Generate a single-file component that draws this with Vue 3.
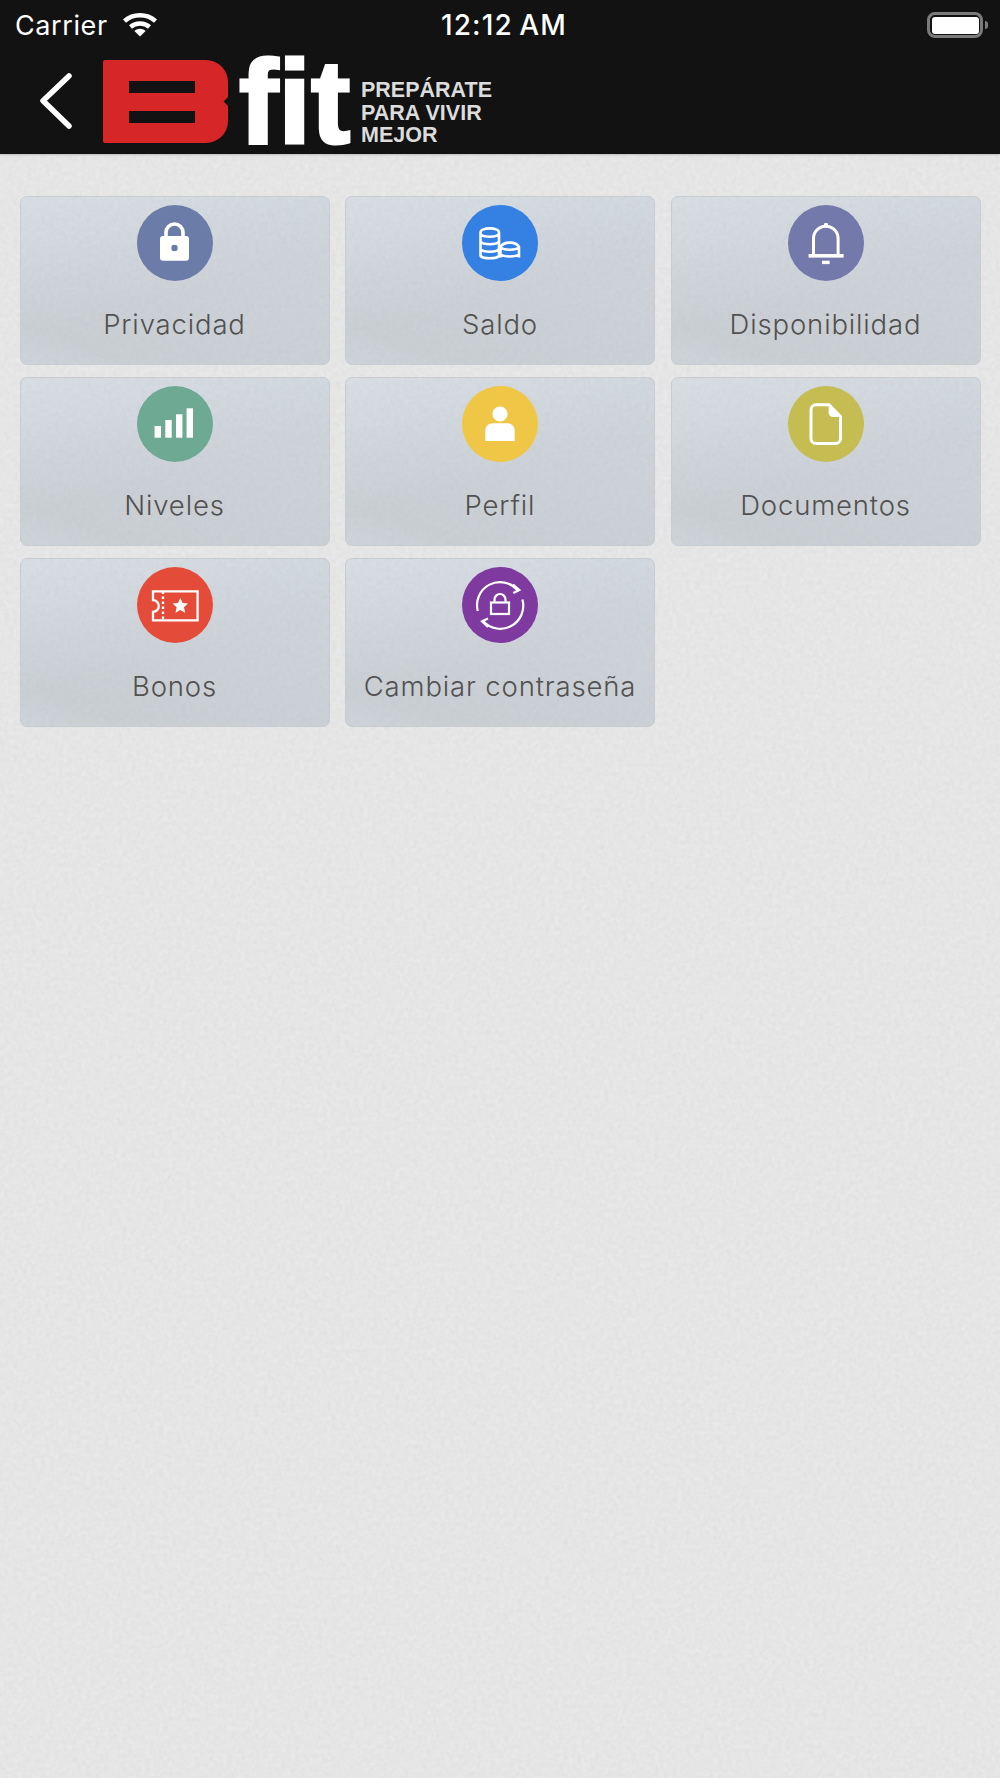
<template>
  <div class="page">
    <header class="topbar">
      <div class="status">
        <div class="carrier">
          <span>Carrier</span>
          <svg class="wifi" width="34" height="24" viewBox="0 0 34 24">
            <path d="M1.500 8.200C10 .4 24 .4 32.500 8.200" />
            <path d="M7.500 14C13 9.200 21 9.200 26.500 14" />
            <path class="wifi-dot" d="M17 23.500l-5.600-5.600c3.200-2.800 8-2.800 11.200 0z" />
          </svg>
        </div>
        <div class="time">12:12 AM</div>
        <div class="battery">
          <div class="battery-box"><div class="battery-fill"></div></div>
          <div class="battery-nub"></div>
        </div>
      </div>
      <div class="nav">
        <svg class="back" width="38" height="60" viewBox="0 0 38 60">
          <path d="M30 5L4 29.700 30 55" />
        </svg>
        <div class="logo">
          <div class="logo-b">
            <span class="logo-hole"></span>
            <span class="logo-hole"></span>
            <span class="logo-notch"></span>
          </div>
          <div class="logo-fit">fit</div>
          <div class="logo-tag">PREPÁRATE<br />PARA VIVIR<br />MEJOR</div>
        </div>
      </div>
    </header>

    <main class="grid">
      <div v-for="item in items" :key="item.label" class="card">
        <div class="circle" :style="{ backgroundColor: item.color }">
          <svg width="76" height="76" viewBox="0 0 76 76">
            <g v-if="item.icon === 'lock'">
              <path class="line" stroke-width="3.600" d="M29 33v-5.500a8.500 8.500 0 0 1 17 0V33" />
              <rect class="solid" x="23" y="31" width="29" height="24.700" rx="3" />
              <circle :fill="item.color" cx="37.500" cy="43" r="3.200" />
            </g>
            <g v-else-if="item.icon === 'coins'" class="line" stroke-width="2.600">
              <path d="M18.500 51.500V27.500c0-5.500 18.500-5.500 18.500 0v24M18.500 29c3 3.600 15.500 3.600 18.500 0M18.500 36.500c3 3.600 15.500 3.600 18.500 0M18.500 44c3 3.600 15.500 3.600 18.500 0M18.500 51c3 3 15.500 3 18.500 0" />
              <path d="M38.500 42c3-5.800 15.500-5.800 18.500 0v10.500M38.500 42c3 3.600 15.500 3.600 18.500 0M38.500 49c3 3.400 15.500 3.400 18.500 0M38.500 42v10.500" />
            </g>
            <g v-else-if="item.icon === 'bell'">
              <path class="line" stroke-width="3" d="M25.500 49.500V33.500a12.300 12.300 0 0 1 24.600 0v16" />
              <rect class="solid" x="20.600" y="49" width="35" height="3.600" />
              <rect class="solid" x="34" y="55.700" width="7.600" height="3.400" />
              <rect class="solid" x="36" y="18" width="4" height="4.500" rx="1" />
            </g>
            <g v-else-if="item.icon === 'bars'" class="solid">
              <rect x="17.600" y="40" width="6.400" height="11.700" />
              <rect x="28.300" y="34" width="6.400" height="17.700" />
              <rect x="39" y="28.300" width="6.400" height="23.400" />
              <rect x="49.600" y="22.300" width="6.400" height="29.400" />
            </g>
            <g v-else-if="item.icon === 'user'" class="solid">
              <circle cx="38" cy="28" r="7.600" />
              <path d="M23.300 55V45c0-4.500 3-7.700 7.500-7.700h14.400c4.500 0 7.500 3.200 7.500 7.700v10z" />
            </g>
            <g v-else-if="item.icon === 'file'">
              <path class="line" stroke-width="3" d="M41 18.800H28a5 5 0 0 0-5 5v28.700a5 5 0 0 0 5 5h19.500a5 5 0 0 0 5-5V30.500z" />
              <path class="solid" d="M40.600 17.600L54 31h-9a4.400 4.400 0 0 1-4.400-4.400z" />
            </g>
            <g v-else-if="item.icon === 'ticket'">
              <path class="line" stroke-width="2.300" d="M16 24.300h44.600v29H16v-8.500a5.800 5.800 0 0 0 0-11.600z" />
              <path class="line" stroke-width="2.300" stroke-dasharray="2.500 2.500" d="M26 24.500v29" />
              <path class="solid" d="M43.300 31l2.300 5 5.400.6-4 3.700 1.100 5.400-4.800-2.700-4.800 2.700 1.100-5.400-4-3.700 5.400-.6z" />
            </g>
            <g v-else class="line" stroke-width="2.200">
              <path d="M15.800 44A23 23 0 0 1 55.800 23.500M60.400 32.500A23 23 0 0 1 21.500 54.500" />
              <path d="M51 17.500l6.300 5.600-6 3M26 60l-6-5.600 6-2.800" />
              <rect x="29" y="35.500" width="18" height="11.500" />
              <path d="M32.500 35.500v-3a5.500 5.500 0 0 1 11 0v3" />
            </g>
          </svg>
        </div>
        <div class="label">{{ item.label }}</div>
      </div>
    </main>

    <svg class="grain" width="1000" height="1624">
      <filter id="paper">
        <feTurbulence type="fractalNoise" baseFrequency="0.22" numOctaves="3" seed="4" />
        <feColorMatrix values="0 0 0 0 0.45  0 0 0 0 0.45  0 0 0 0 0.45  0.5 0.5 0 0 -0.32" />
      </filter>
      <rect width="1000" height="1624" filter="url(#paper)" opacity="0.3" />
    </svg>
  </div>
</template>

<script setup>
const items = [
  { label: 'Privacidad', icon: 'lock', color: '#6c7ca9' },
  { label: 'Saldo', icon: 'coins', color: '#3581e3' },
  { label: 'Disponibilidad', icon: 'bell', color: '#7479ab' },
  { label: 'Niveles', icon: 'bars', color: '#6eaa93' },
  { label: 'Perfil', icon: 'user', color: '#f0c646' },
  { label: 'Documentos', icon: 'file', color: '#c5bd51' },
  { label: 'Bonos', icon: 'ticket', color: '#e44c39' },
  { label: 'Cambiar contraseña', icon: 'sync', color: '#7f3a9f' },
]
</script>

<style>
html,
body {
  margin: 0;
  background: #e8e8e8;
}
</style>

<style scoped>
.page {
  position: relative;
  width: 1000px;
  height: 1778px;
  overflow: hidden;
  background: #e8e8e8;
  font-family: Inter, "Liberation Sans", sans-serif;
}

.grain {
  position: absolute;
  left: 0;
  top: 154px;
  z-index: 1;
  pointer-events: none;
}

.topbar {
  position: relative;
  height: 154px;
  background: #121212;
  color: #fff;
  box-shadow: 0 1px 2px rgba(0, 0, 0, 0.2);
}

.status {
  display: flex;
  align-items: center;
  height: 50px;
  padding-left: 15px;
  box-sizing: border-box;
}

.carrier {
  display: flex;
  align-items: center;
  gap: 15px;
  width: 425px;
  font-size: 27px;
  font-weight: 400;
  letter-spacing: 0.6px;
}

.wifi path {
  fill: none;
  stroke: #fff;
  stroke-width: 4.500;
}

.wifi .wifi-dot {
  fill: #fff;
  stroke: none;
}

.time {
  width: 128px;
  font-size: 28px;
  font-weight: 500;
  letter-spacing: 1.1px;
  word-spacing: -2px;
  white-space: nowrap;
  text-align: center;
}

.battery {
  display: flex;
  align-items: center;
  gap: 2px;
  margin-left: auto;
  margin-right: 12px;
}

.battery-box {
  width: 56px;
  height: 26px;
  box-sizing: border-box;
  border: 3px solid #7b7b7b;
  border-radius: 8px;
  padding: 1.500px;
}

.battery-fill {
  height: 100%;
  background: #fff;
  border-radius: 3px;
}

.battery-nub {
  width: 3px;
  height: 8px;
  background: #7b7b7b;
  border-radius: 0 3px 3px 0;
}

.nav {
  display: flex;
  align-items: flex-start;
  height: 104px;
  padding-left: 39px;
}

.back {
  margin-top: 21px;
  margin-right: 26px;
}

.back path {
  fill: none;
  stroke: #fff;
  stroke-width: 5.500;
  stroke-linecap: round;
  stroke-linejoin: round;
}

.logo {
  display: flex;
  align-items: flex-start;
  margin-top: 10px;
}

.logo-b {
  position: relative;
  display: flex;
  flex-direction: column;
  align-items: flex-start;
  gap: 18px;
  width: 125px;
  height: 83px;
  box-sizing: border-box;
  padding: 21px 0 0 26px;
  background: #d62628;
  border-radius: 2px 22px 22px 2px;
}

.logo-hole {
  display: block;
  width: 66px;
  height: 12px;
  background: #121212;
}

.logo-notch {
  position: absolute;
  right: -4px;
  top: 38px;
  width: 7px;
  height: 7px;
  background: #121212;
  transform: rotate(45deg);
}

.logo-fit {
  width: 122px;
  height: 81px;
  margin: 1px 0 0 11px;
  font-family: "Liberation Sans", Arial, sans-serif;
  font-size: 118px;
  font-weight: 700;
  line-height: 83px;
  color: #fff;
  -webkit-text-stroke: 3px #fff;
  white-space: nowrap;
}

.logo-tag {
  margin-top: 19px;
  font-family: "Liberation Sans", Arial, sans-serif;
  font-size: 21.500px;
  font-weight: 700;
  line-height: 22.500px;
  color: #dcdcdc;
}

.grid {
  position: relative;
  display: grid;
  grid-template-columns: repeat(3, 310px);
  grid-auto-rows: 169px;
  gap: 12px 15.500px;
  padding: 42px 0 0 19.500px;
}

.card {
  display: flex;
  flex-direction: column;
  align-items: center;
  box-sizing: border-box;
  padding-top: 8px;
  border: 1px solid #c9ced4;
  border-radius: 7px;
  background:
    linear-gradient(165deg, rgba(225, 232, 236, 0.6) 0%, rgba(215, 222, 228, 0.35) 35%, rgba(200, 205, 212, 0) 55%),
    linear-gradient(200deg, #cfd6dd 0%, #ccd1d7 60%, #cacfd4 85%, #cfd5db 100%);
}

.circle {
  position: relative;
  z-index: 2;
  width: 76px;
  height: 76px;
  border-radius: 50%;
  flex-shrink: 0;
}

.circle svg {
  display: block;
}

.line {
  fill: none;
  stroke: #fff;
}

.solid {
  fill: #fff;
}

.label {
  position: relative;
  z-index: 2;
  margin-top: 27px;
  font-size: 27.500px;
  font-weight: 300;
  line-height: 32px;
  letter-spacing: 0.85px;
  color: #515151;
  white-space: nowrap;
}
</style>
